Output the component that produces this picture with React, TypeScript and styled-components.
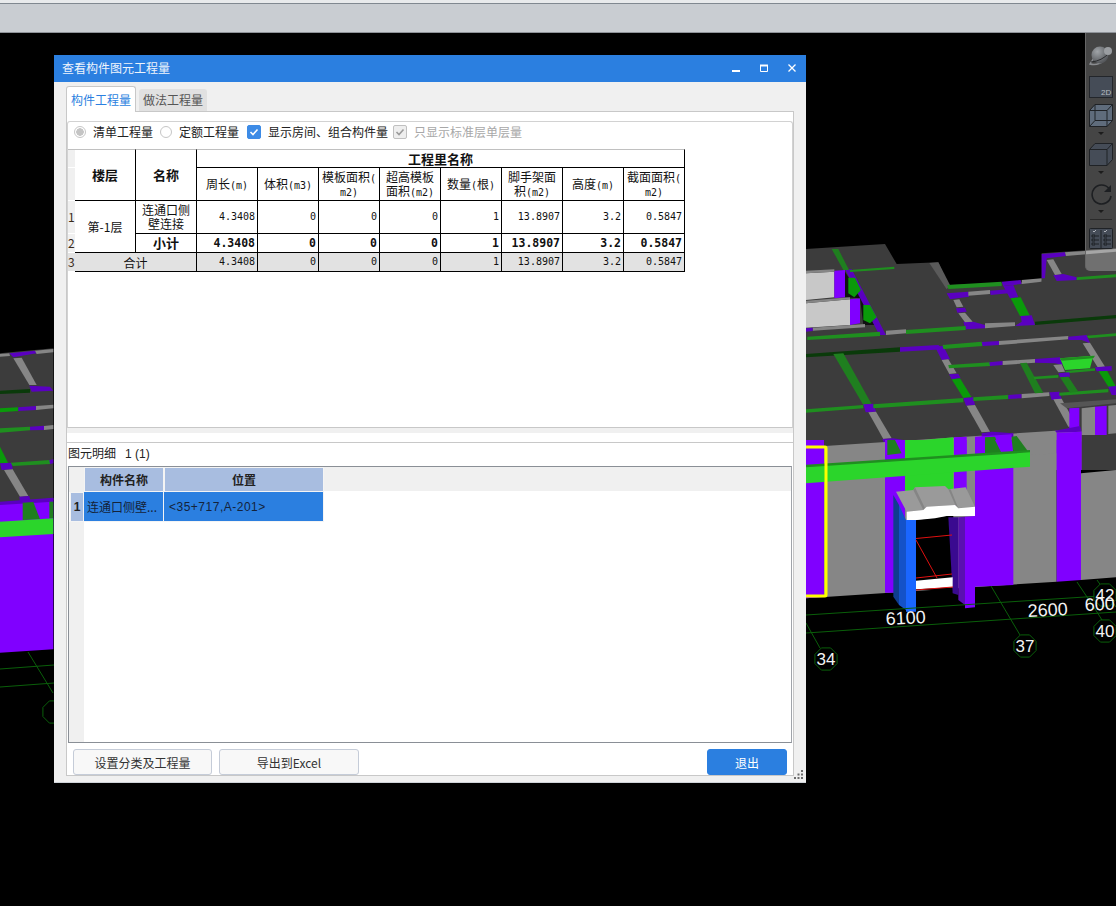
import React from 'react'
import styled, { createGlobalStyle } from 'styled-components'

const BLUE = '#2b7fe0'
const PURPLE = '#8000ff'
const DEEP = '#5a00c0'
const GRAY = '#868686'
const LIME = '#2bd52b'
const GREEN = '#1f8f1f'
const VIVID = '#0a9a0a'
const MOSS = '#1f7f1f'
const NIGHT = '#0a3a0a'
const SLAB = '#3c3c3c'
const GRID = '#0a5f0a'

const GlobalStyle = createGlobalStyle`
  html, body { margin: 0; padding: 0; background: #000; }
  body { font-family: "Noto Sans CJK SC", "Liberation Sans", sans-serif; font-size: 12px; color: #222; }
`

const Page = styled.div`
  width: 1116px;
  height: 906px;
  display: flex;
  flex-direction: column;
  overflow: hidden;
`

const TopBar = styled.div`
  height: 29px;
  flex: none;
  background: #c9cdd2;
  border-top: 3px solid #e8eaec;
  border-bottom: 1px solid #8f9399;
  box-shadow: inset 0 1px 0 #808890;
`

const Viewport = styled.div`
  position: relative;
  flex: 1;
  background: #000;
`

const SceneSvg = styled.svg`
  position: absolute;
  inset: 0;
  display: block;
`

/* scene */
type Shape = [string, number[]]

// coordinates were read from 3x crops, so they are mapped back here
const place = (ox: number, oy: number, a: number[]) =>
  a.map((v, i) => (i % 2 === 0 ? ox + v / 3 : oy + v / 3)).join(' ')

const upperRight: Shape[] = [
  [SLAB, [18, 27, 255, 12, 290, 72, 415, 67, 445, 135, 725, 125, 725, 40, 948, 25, 948, 600, 18, 640]],
  ['#c8c8c8', [18, 100, 103, 95, 103, 172, 18, 180]],
  ['#c8c8c8', [18, 190, 150, 178, 150, 255, 18, 263]],
  [PURPLE, [103, 92, 135, 90, 135, 172, 103, 175]],
  [PURPLE, [150, 178, 180, 175, 180, 250, 150, 255]],
  ['#111', [135, 95, 190, 180, 230, 255, 190, 255, 180, 175, 135, 172]],
  [GRAY, [18, 92, 103, 88, 103, 95, 18, 100]],
  [GRAY, [18, 182, 150, 172, 150, 178, 18, 190]],
  [DEEP, [135, 88, 155, 88, 258, 285, 238, 285]],
  [VIVID, [145, 113, 165, 113, 183, 150, 163, 172, 145, 160]],
  [VIVID, [190, 195, 210, 195, 230, 232, 210, 250, 190, 240]],
  [MOSS, [95, 27, 115, 27, 147, 90, 130, 90]],
  [GREEN, [150, 90, 283, 80, 283, 87, 150, 96]],
  ['#5a5a5a', [388, 69, 415, 67, 450, 135, 440, 148]],
  [DEEP, [440, 160, 505, 155, 507, 170, 450, 178]],
  [GRAY, [505, 155, 570, 150, 570, 162, 505, 167]],
  [DEEP, [570, 152, 625, 148, 625, 160, 572, 165]],
  [GREEN, [442, 135, 605, 125, 605, 138, 445, 147]],
  [DEEP, [605, 125, 662, 120, 665, 132, 610, 138]],
  [GRAY, [665, 120, 725, 115, 725, 125, 665, 132]],
  [DEEP, [610, 138, 640, 135, 655, 172, 630, 175]],
  [VIVID, [632, 175, 662, 172, 690, 228, 660, 228]],
  [DEEP, [662, 228, 695, 226, 705, 255, 645, 258, 665, 245]],
  [NIGHT, [705, 245, 948, 225, 948, 235, 705, 255]],
  [GRAY, [555, 250, 645, 247, 645, 258, 555, 265]],
  [DEEP, [490, 245, 520, 245, 555, 255, 555, 265, 497, 268]],
  [GREEN, [318, 270, 497, 258, 497, 270, 318, 282]],
  [GRAY, [258, 272, 318, 268, 318, 280, 258, 285]],
  [GRAY, [460, 180, 478, 178, 490, 200, 470, 202]],
  [DEEP, [468, 205, 495, 203, 500, 215, 472, 218]],
  [GRAY, [475, 220, 495, 218, 518, 245, 495, 247]],
  [GREEN, [22, 290, 240, 275, 240, 288, 22, 300]],
  [GRAY, [38, 263, 195, 252, 195, 262, 38, 272]],
  [DEEP, [18, 265, 38, 263, 38, 273, 18, 275]],
  [NIGHT, [18, 342, 300, 322, 300, 335, 18, 352]],
  [DEEP, [300, 322, 415, 315, 430, 328, 300, 335]],
  [DEEP, [405, 320, 430, 318, 450, 358, 425, 360]],
  [GRAY, [425, 360, 445, 358, 470, 400, 448, 402]],
  [DEEP, [447, 403, 475, 401, 482, 415, 455, 418]],
  [VIVID, [455, 418, 480, 415, 515, 472, 490, 474]],
  [DEEP, [490, 474, 520, 472, 525, 495, 498, 497]],
  [GRAY, [500, 497, 525, 495, 570, 575, 545, 577]],
  [GREEN, [428, 315, 545, 305, 548, 318, 430, 327]],
  [DEEP, [545, 306, 597, 303, 597, 315, 548, 318]],
  [GRAY, [597, 303, 805, 288, 805, 298, 597, 315]],
  [DEEP, [805, 290, 860, 285, 870, 310, 845, 300, 805, 300]],
  [GREEN, [860, 287, 948, 280, 948, 288, 865, 295]],
  [GRAY, [848, 310, 870, 308, 915, 380, 893, 382]],
  [VIVID, [895, 393, 920, 390, 948, 440, 925, 440]],
  [DEEP, [885, 382, 935, 378, 935, 392, 890, 394]],
  [DEEP, [925, 440, 948, 438, 948, 465, 935, 465]],
  [MOSS, [100, 342, 130, 340, 215, 493, 190, 495]],
  [GREEN, [18, 508, 190, 495, 190, 505, 18, 518]],
  [DEEP, [190, 493, 220, 491, 228, 515, 197, 517]],
  [GREEN, [220, 493, 490, 474, 490, 487, 220, 505]],
  [GRAY, [205, 517, 228, 515, 275, 595, 250, 597]],
  [DEEP, [247, 597, 280, 595, 310, 600, 310, 612, 255, 615]],
  [GREEN, [520, 472, 625, 465, 625, 477, 520, 483]],
  [DEEP, [625, 465, 665, 462, 665, 475, 625, 477]],
  [GRAY, [665, 462, 748, 457, 748, 468, 665, 475]],
  [DEEP, [748, 457, 778, 455, 785, 478, 755, 480]],
  [GREEN, [778, 458, 925, 447, 925, 457, 778, 467]],
  [GRAY, [760, 478, 785, 476, 830, 558, 805, 560]],
  [GREEN, [445, 375, 570, 367, 570, 378, 447, 385]],
  [DEEP, [568, 367, 608, 363, 608, 375, 570, 378]],
  [GRAY, [608, 363, 705, 357, 705, 368, 608, 375]],
  [DEEP, [705, 357, 780, 352, 788, 375, 765, 370, 705, 368]],
  [GRAY, [760, 375, 785, 373, 795, 395, 775, 397]],
  [LIME, [780, 355, 880, 347, 870, 385, 795, 390]],
  [GREEN, [780, 355, 885, 347, 880, 355, 785, 362]],
  [GREEN, [795, 393, 885, 385, 885, 392, 800, 400]],
  [DEEP, [775, 400, 808, 397, 810, 410, 780, 412]],
  [MOSS, [660, 370, 680, 368, 730, 458, 705, 460]],
  [GREEN, [700, 410, 775, 405, 775, 413, 703, 418]],
  [MOSS, [780, 412, 805, 410, 835, 455, 810, 458]],
  ['#555', [780, 490, 948, 478, 948, 490, 800, 505]],
  [DEEP, [725, 42, 795, 37, 798, 48, 740, 55, 735, 115, 725, 115]],
  [GRAY, [795, 37, 948, 27, 948, 35, 798, 48]],
  [DEEP, [760, 105, 790, 102, 830, 112, 830, 120, 770, 123]],
  [GREEN, [830, 112, 948, 103, 948, 112, 830, 120]],
  [GRAY, [740, 60, 760, 58, 785, 102, 765, 105]],
  [GRAY, [18, 622, 765, 572, 845, 572, 845, 690, 18, 690]],
  [SLAB, [845, 585, 948, 575, 948, 690, 845, 690]],
  [PURPLE, [808, 505, 838, 503, 838, 572, 808, 572]],
  [GRAY, [845, 505, 885, 500, 885, 585, 845, 585]],
  [PURPLE, [885, 500, 920, 497, 920, 585, 885, 585]],
  [GRAY, [925, 497, 948, 495, 948, 580, 925, 582]],
  [DEEP, [545, 580, 575, 575, 640, 580, 640, 592, 545, 590]],
  [DEEP, [765, 572, 840, 558, 845, 575, 770, 578]],
  [PURPLE, [770, 578, 845, 575, 845, 690, 770, 690]],
  [PURPLE, [255, 615, 315, 612, 315, 690, 255, 690]],
  [MOSS, [262, 615, 285, 612, 305, 660, 262, 662]],
  [LIME, [315, 605, 460, 592, 460, 650, 315, 660]],
  [PURPLE, [462, 592, 500, 590, 500, 650, 462, 650]],
  [PURPLE, [525, 590, 635, 583, 635, 690, 525, 690]],
  [MOSS, [555, 592, 585, 590, 605, 640, 555, 642]],
  [MOSS, [635, 590, 650, 588, 685, 635, 635, 640]],
]

const lowerRight: Shape[] = [
  [GRAY, [18, 90, 770, 40, 770, 425, 18, 475]],
  [GRAY, [843, 100, 948, 90, 948, 412, 843, 420]],
  [PURPLE, [770, 0, 843, 0, 843, 420, 770, 425]],
  [PURPLE, [18, 0, 72, 0, 72, 470, 18, 475]],
  [PURPLE, [255, 0, 315, 0, 315, 458, 255, 458]],
  [PURPLE, [462, 0, 500, 0, 500, 200, 462, 200]],
  [PURPLE, [525, 0, 640, 0, 640, 435, 525, 440]],
  [LIME, [315, 0, 460, 0, 460, 150, 315, 155]],
  [MOSS, [262, 0, 285, 0, 305, 40, 262, 45]],
  [MOSS, [555, 0, 585, 0, 605, 40, 555, 42]],
  [MOSS, [635, 0, 650, 0, 680, 35, 640, 38]],
  [LIME, [18, 80, 690, 35, 690, 80, 18, 130]],
  [GREEN, [18, 74, 690, 30, 690, 37, 18, 82]],
  ['#9a9a9a', [288, 155, 340, 150, 345, 142, 435, 138, 445, 148, 497, 142, 525, 200, 470, 205, 465, 195, 380, 200, 370, 210, 320, 215]],
  ['#858585', [340, 150, 345, 142, 375, 205, 370, 210]],
  ['#858585', [445, 148, 452, 148, 475, 205, 470, 205]],
  ['#000', [348, 240, 460, 225, 460, 450, 348, 450]],
  ['#fff', [320, 215, 370, 210, 380, 200, 465, 195, 475, 205, 525, 200, 525, 228, 440, 228, 405, 235, 320, 243]],
  ['#0f3d8f', [280, 165, 297, 195, 297, 495, 280, 470]],
  ['#1452c8', [297, 195, 318, 240, 318, 510, 297, 495]],
  ['#1a66ff', [318, 240, 348, 240, 348, 515, 318, 515]],
  ['#3a0a90', [445, 232, 475, 232, 475, 465, 458, 460]],
  ['#5a10b0', [475, 232, 495, 230, 495, 495, 475, 480]],
  [PURPLE, [495, 230, 525, 228, 525, 502, 495, 505]],
  ['#fff', [348, 422, 458, 412, 458, 442, 348, 448]],
]

const leftSide: Shape[] = [
  [SLAB, [0, 70, 160, 55, 160, 510, 0, 525]],
  [DEEP, [28, 70, 105, 62, 110, 70, 40, 82]],
  [GRAY, [105, 62, 160, 57, 160, 67, 110, 72]],
  [GRAY, [0, 72, 28, 70, 30, 78, 0, 80]],
  [GRAY, [40, 85, 65, 83, 110, 165, 88, 165]],
  [DEEP, [88, 167, 150, 170, 160, 182, 95, 185]],
  [NIGHT, [0, 182, 90, 177, 90, 188, 0, 192]],
  [VIVID, [0, 235, 55, 232, 55, 243, 0, 247]],
  [DEEP, [55, 232, 108, 228, 108, 240, 55, 243]],
  [GRAY, [108, 228, 160, 224, 160, 235, 108, 240]],
  [GREEN, [0, 295, 90, 290, 90, 301, 0, 308]],
  [DEEP, [90, 290, 132, 287, 132, 300, 90, 301]],
  [GRAY, [132, 288, 160, 285, 160, 297, 132, 300]],
  [VIVID, [0, 350, 25, 400, 0, 400]],
  [DEEP, [0, 400, 35, 398, 38, 418, 5, 420]],
  [GREEN, [32, 398, 150, 390, 150, 402, 38, 408]],
  [DEEP, [148, 390, 160, 388, 160, 400, 150, 402]],
  [GRAY, [12, 420, 38, 418, 85, 498, 60, 500]],
  [DEEP, [58, 500, 88, 498, 92, 515, 60, 517]],
  [PURPLE, [0, 520, 160, 505, 160, 958, 0, 968]],
  [DEEP, [0, 515, 160, 503, 160, 515, 0, 525]],
  [MOSS, [68, 518, 100, 516, 120, 568, 68, 570]],
  [MOSS, [148, 515, 160, 515, 160, 565, 148, 565]],
  [LIME, [0, 575, 160, 565, 160, 612, 0, 622]],
]

const gridLines = [
  [806, 615, 1116, 595],
  [806, 633, 1013, 619, 1116, 612],
  [806, 623, 820, 648],
  [991, 586, 1020, 635],
  [1077, 582, 1097, 612, 1102, 620],
  [1097, 580, 1116, 607],
  [28, 652, 53, 693],
  [0, 669, 54, 665],
  [0, 687, 54, 683],
]

const badges = [
  { x: 826, y: 659, label: '34' },
  { x: 1025, y: 646, label: '37' },
  { x: 1105, y: 631, label: '40' },
  { x: 1105, y: 595, label: '42' },
  { x: 54, y: 712, label: '' },
]

const octagon = (cx: number, cy: number, r: number) =>
  Array.from({ length: 8 }, (_, i) => {
    const a = Math.PI / 8 + (i * Math.PI) / 4
    return `${cx + r * Math.cos(a)},${cy + r * Math.sin(a)}`
  }).join(' ')

const SceneText = styled.text`
  font-family: "Liberation Sans", sans-serif;
  fill: #f4f4f4;
`

const Scene = () => (
  <SceneSvg width="1116" height="873" viewBox="0 33 1116 873">
    {upperRight.map(([fill, a], i) => (
      <polygon key={`u${i}`} fill={fill} points={place(800, 240, a)} />
    ))}
    {lowerRight.map(([fill, a], i) => (
      <polygon key={`l${i}`} fill={fill} points={place(800, 440, a)} />
    ))}
    {leftSide.map(([fill, a], i) => (
      <polygon key={`s${i}`} fill={fill} points={place(0, 330, a)} />
    ))}
    <path d="M806 447h19q1 0 1 1v147q0 1-1 1h-19" fill="none" stroke="#ffff00" strokeWidth="3" />
    <g stroke="#e01010" strokeWidth="1" fill="none">
      <path d="M916 538.5 952 535M916 540 937 578M916 578 952 574M916 590 953 587" />
    </g>
    {gridLines.map((l, i) => (
      <polyline key={i} points={l.join(' ')} fill="none" stroke={GRID} strokeWidth="1" />
    ))}
    {badges.map(b => (
      <g key={b.x}>
        <polygon points={octagon(b.x, b.y, 12)} fill="#000" stroke={GRID} strokeWidth="1" />
        <SceneText x={b.x} y={b.y + 6} textAnchor="middle" fontSize="17">{b.label}</SceneText>
      </g>
    ))}
    <SceneText x="886" y="625" fontSize="18" transform="rotate(-3 886 625)">6100</SceneText>
    <SceneText x="1028" y="617" fontSize="18" transform="rotate(-3 1028 617)">2600</SceneText>
    <SceneText x="1085" y="611" fontSize="18" transform="rotate(-3 1085 611)">600</SceneText>
  </SceneSvg>
)

/* right toolbar in the viewport */
const ViewTools = styled.div`
  position: absolute;
  top: 0;
  right: 0;
  width: 31px;
  height: 238px;
  padding-top: 12px;
  box-sizing: border-box;
  display: flex;
  flex-direction: column;
  align-items: center;
  background: rgba(255, 255, 255, 0.27);
  border-left: 1px solid #666;
  border-bottom-left-radius: 5px;
`

const ToolIcon = styled.svg<{ $before?: number; $after?: number }>`
  display: block;
  flex: none;
  margin-top: ${({ $before }) => $before ?? 0}px;
  margin-bottom: ${({ $after }) => $after ?? 0}px;
`

const Drop = styled.div`
  flex: none;
  width: 0;
  height: 0;
  border-left: 3px solid transparent;
  border-right: 3px solid transparent;
  border-top: 3px solid #1c1c1c;
`

const ToolRule = styled.div`
  flex: none;
  width: 22px;
  height: 1px;
  margin: 6px 0 7px;
  background: #2a2a2a;
`

const Tools = () => (
  <ViewTools>
    <ToolIcon width="24" height="21" viewBox="0 0 24 21" $after={10}>
      <defs>
        <radialGradient id="ball" cx="0.35" cy="0.3" r="0.8">
          <stop offset="0" stopColor="#a0a4a8" />
          <stop offset="1" stopColor="#4a4c50" />
        </radialGradient>
      </defs>
      <path d="M5 13 1 19Q9 21 16 15" fill="none" stroke="#8a8c90" strokeWidth="1.500" />
      <circle cx="11" cy="10" r="8.500" fill="url(#ball)" />
      <path d="M2 17Q13 16 20 8" stroke="#2a2b2e" strokeWidth="1" fill="none" />
      <circle cx="19" cy="6" r="4" fill="#9a9da1" />
    </ToolIcon>
    <ToolIcon width="24" height="22" viewBox="0 0 24 22" $after={6}>
      <rect x="0.5" y="0.5" width="23" height="21" fill="#454c57" stroke="#23262b" />
      <text x="12" y="19" fontSize="8" fill="#b8bcc2" fontFamily="Liberation Sans">2D</text>
    </ToolIcon>
    <ToolIcon width="24" height="23" viewBox="0 0 24 23" $after={5}>
      <path d="M.5 6.500 6 .5h17.500v16L18 22.500H.5z" fill="#5f6c7c" stroke="#1f2226" />
      <path d="M.5 6.500H18V22.500M18 6.500 23.500.5M6 .5V16.500H23.500M6 16.500.5 22.500" fill="none" stroke="#1f2226" />
    </ToolIcon>
    <Drop />
    <ToolIcon width="24" height="23" viewBox="0 0 24 23" $before={8} $after={5}>
      <path d="M.5 6.500 6 .5h17.500v16L18 22.500H.5z" fill="#454c57" stroke="#1f2226" />
      <path d="M.5 6.500H18V22.500M18 6.500 23.500.5" fill="none" stroke="#1f2226" />
    </ToolIcon>
    <Drop />
    <ToolIcon width="24" height="21" viewBox="0 0 24 21" $before={10} $after={5}>
      <path d="M20 4.500A9.500 9.500 0 1 0 22 12" fill="none" stroke="#1d1f22" strokeWidth="1.600" />
      <path d="M22 1v7h-7z" fill="#1d1f22" />
    </ToolIcon>
    <Drop />
    <ToolRule />
    <ToolIcon width="24" height="22" viewBox="0 0 24 22">
      <rect x="0.5" y="1.500" width="23" height="20" rx="1" fill="#454c57" stroke="#1f2226" />
      <path d="M12 3v18M3 8h3v2H3zM3 12h3v2H3zM3 16h3v2H3zM15 8h3v2h-3zM15 12h3v2h-3zM15 16h3v2h-3zM7 9h3M7 13h3M7 17h3M19 9h3M19 13h3M19 17h3" fill="none" stroke="#15171a" strokeWidth="0.800" />
      <path d="M4 4l1 1 2-2M15 4l1 1 2-2" fill="none" stroke="#c8ccd0" strokeWidth="0.800" />
    </ToolIcon>
  </ViewTools>
)

/* dialog */
const Dialog = styled.div`
  position: absolute;
  left: 54px;
  top: 22px;
  width: 752px;
  height: 728px;
  display: flex;
  flex-direction: column;
  box-sizing: border-box;
  background: #f0f0f0;
  border-bottom: 1px solid #cfd3d8;
`

const TitleBar = styled.div`
  height: 27px;
  flex: none;
  box-sizing: border-box;
  display: flex;
  align-items: center;
  justify-content: space-between;
  padding: 0 8px 2px;
  background: ${BLUE};
  color: #eef4fc;
`

const WindowButtons = styled.div`
  display: flex;
  align-items: center;
  gap: 20px;
  margin-right: 2px;
`

const DialogBody = styled.div`
  flex: 1;
  min-height: 0;
  display: flex;
  flex-direction: column;
  padding: 4px 12px 6px;
  position: relative;
`

const TabStrip = styled.div`
  height: 25px;
  flex: none;
  display: flex;
  align-items: flex-end;
  gap: 3px;
`

const Tab = styled.div<{ $active?: boolean }>`
  box-sizing: border-box;
  text-align: center;
  ${({ $active }) =>
    $active
      ? `
    width: 70px;
    height: 26px;
    margin-bottom: -1px;
    line-height: 26px;
    color: ${BLUE};
    background: #fff;
    border: 1px solid #c8c8c8;
    border-bottom: none;
    border-radius: 3px 3px 0 0;
    position: relative;
    z-index: 1;
  `
      : `
    width: 68px;
    height: 22px;
    line-height: 22px;
    color: #555;
    background: #e1e1e1;
    border-radius: 3px 3px 0 0;
  `}
`

const TabPane = styled.div`
  flex: 1;
  min-height: 0;
  display: flex;
  flex-direction: column;
  background: #fff;
  border: 1px solid #c8c8c8;
  padding-top: 9px;
`

const GroupBox = styled.div`
  height: 307px;
  flex: none;
  box-sizing: border-box;
  border: 1px solid #d2d2d2;
  border-bottom: 1px solid #c8c8c8;
  border-radius: 3px 3px 0 0;
`

const OptionRow = styled.div`
  height: 27px;
  display: flex;
  align-items: center;
  padding-left: 6px;
  padding-bottom: 7px;
  box-sizing: border-box;
`

const Radio = styled.span<{ $on?: boolean }>`
  flex: none;
  width: 12px;
  height: 12px;
  box-sizing: border-box;
  border: 1px solid #c6c6c6;
  border-radius: 50%;
  background: ${({ $on }) => ($on ? 'radial-gradient(circle, #c4c4c4 0 3.5px, #fff 4px)' : '#fff')};
`

const Box = styled.span<{ $off?: boolean }>`
  flex: none;
  width: 14px;
  height: 14px;
  box-sizing: border-box;
  display: flex;
  align-items: center;
  justify-content: center;
  border-radius: 2px;
  background: ${({ $off }) => ($off ? '#eee' : '#3d8be6')};
  border: 1px solid ${({ $off }) => ($off ? '#c0c0c0' : '#3d8be6')};
`

const Option = styled.span<{ $dim?: boolean; $gap: number }>`
  margin-left: 7px;
  margin-right: ${({ $gap }) => $gap}px;
  color: ${({ $dim }) => ($dim ? '#a8a8a8' : '#222')};
  line-height: 14px;
`

const QuantityTable = styled.table`
  table-layout: fixed;
  width: 617px;
  border-collapse: separate;
  border-spacing: 0;
  color: #111;

  td, th {
    padding: 0;
    border-right: 1px solid #000;
    border-bottom: 1px solid #000;
    box-sizing: border-box;
    text-align: center;
    line-height: 14px;
    font-size: 12px;
    font-weight: 400;
  }
  thead tr:first-child td, thead tr:first-child th {
    border-top: 1px solid #c0c0c0;
  }
  tr.head-top { height: 19px; }
  tr.head-sub { height: 33px; }
  tr.line { height: 33px; }
  tr.sum { height: 19px; }
  tr.total { height: 19px; }
  tr.total td { background: #e2e2e2; }
  .strong { font-weight: 700; font-size: 13px; }
  td.merged { padding-top: 1px; }
`

const Gutter = styled.td`
  && {
    width: 7px;
    background: #f0f0f0;
    border-right: none;
    border-bottom: 1px solid #fff;
    text-align: left;
    color: #3a2a18;
    overflow: hidden;
  }
`

const Num = styled.td<{ $bold?: boolean }>`
  && {
    text-align: right;
    padding-right: 2px;
    font-family: "DejaVu Sans Mono", "Liberation Mono", monospace;
    font-size: ${({ $bold }) => ($bold ? 11.5 : 10)}px;
    font-weight: ${({ $bold }) => ($bold ? 700 : 400)};
  }
`

const Unit = styled.span`
  font-family: "DejaVu Sans Mono", "Liberation Mono", monospace;
  font-size: 10px;
  line-height: 1;
`

const Splitter = styled.div`
  flex: none;
  height: 5px;
  background: #f0f0f0;
  margin-bottom: 9px;
`

const DetailLabel = styled.div`
  flex: none;
  height: 24px;
  box-sizing: border-box;
  border-top: 1px solid #c8c8c8;
  padding-left: 1px;
  line-height: 19px;
  color: #222;
`

const DetailCount = styled.span`
  margin-left: 9px;
  font-family: "Liberation Sans", sans-serif;
`

const DetailGrid = styled.div`
  flex: 1;
  min-height: 0;
  margin: 0 1px;
  box-sizing: border-box;
  display: grid;
  grid-template-columns: 15px 80px 160px 1fr;
  grid-template-rows: 25px 30px 1fr;
  border: 1px solid #8a8f96;
  border-right-color: #a0a4aa;
  background: #fff;
`

const Corner = styled.div`
  background: #f0f0f0;
`

const HeadCell = styled.div`
  background: #a8bde0;
  border: 1px solid #f4f4f4;
  display: flex;
  align-items: center;
  justify-content: center;
  font-weight: 700;
  color: #222;
`

const HeadRest = styled.div`
  background: #f0f0f0;
  border-bottom: 1px solid #fff;
`

const RowMark = styled.div`
  background: #a8bde0;
  border: 1px solid #f4f4f4;
  margin-left: 1px;
  display: flex;
  align-items: center;
  justify-content: center;
  font-family: "Liberation Sans", sans-serif;
  font-weight: 700;
  font-size: 12px;
`

const RowCell = styled.div<{ $latin?: boolean }>`
  background: ${BLUE};
  border-right: 1px solid #f4f4f4;
  border-bottom: 1px solid #f4f4f4;
  padding-left: ${({ $latin }) => ($latin ? 5 : 3)}px;
  display: flex;
  align-items: center;
  white-space: nowrap;
  overflow: hidden;
  color: #14233a;
  font-family: ${({ $latin }) => ($latin ? '"Liberation Sans", sans-serif' : 'inherit')};
  letter-spacing: ${({ $latin }) => ($latin ? 0.5 : 0)}px;
`

const GutterFill = styled.div`
  background: #f0f0f0;
`

const Footer = styled.div`
  flex: none;
  height: 32px;
  box-sizing: border-box;
  display: flex;
  align-items: flex-start;
  gap: 7px;
  padding: 6px 6px 0;
`

const Button = styled.div<{ $primary?: boolean; $width: number }>`
  box-sizing: border-box;
  width: ${({ $width }) => $width}px;
  height: 26px;
  display: flex;
  align-items: center;
  justify-content: center;
  border-radius: 3px;
  color: ${({ $primary }) => ($primary ? '#fff' : '#333')};
  background: ${({ $primary }) => ($primary ? BLUE : '#f8f8f8')};
  border: 1px solid ${({ $primary }) => ($primary ? BLUE : '#c5ccd8')};
  margin-left: ${({ $primary }) => ($primary ? 'auto' : '0')};
`

const Grip = styled.svg`
  position: absolute;
  right: 2px;
  bottom: 2px;
  display: block;
`

const columns: React.ReactNode[] = [
  <>周长<Unit>(m)</Unit></>,
  <>体积<Unit>(m3)</Unit></>,
  <>模板面积<Unit>(</Unit><br /><Unit>m2)</Unit></>,
  <>超高模板<br />面积<Unit>(m2)</Unit></>,
  <>数量<Unit>(</Unit>根<Unit>)</Unit></>,
  <>脚手架面<br />积<Unit>(m2)</Unit></>,
  <>高度<Unit>(m)</Unit></>,
  <>截面面积<Unit>(</Unit><br /><Unit>m2)</Unit></>,
]

const values = ['4.3408', '0', '0', '0', '1', '13.8907', '3.2', '0.5847']

const App = () => (
  <Page>
    <GlobalStyle />
    <TopBar />
    <Viewport>
      <Scene />
      <Tools />
      <Dialog>
        <TitleBar>
          <span>查看构件图元工程量</span>
          <WindowButtons>
            <svg width="8" height="8" viewBox="0 0 8 8"><path d="M0 7h8" stroke="#fff" strokeWidth="2" /></svg>
            <svg width="8" height="8" viewBox="0 0 8 8"><path d="M.5 1.500h7v6h-7z" fill="none" stroke="#fff" /><path d="M0 1.500h8" stroke="#fff" strokeWidth="2" /></svg>
            <svg width="8" height="8" viewBox="0 0 8 8"><path d="M.5.5l7 7M7.500.5l-7 7" stroke="#fff" strokeWidth="1.300" /></svg>
          </WindowButtons>
        </TitleBar>
        <DialogBody>
          <TabStrip>
            <Tab $active>构件工程量</Tab>
            <Tab>做法工程量</Tab>
          </TabStrip>
          <TabPane>
            <GroupBox>
              <OptionRow>
                <Radio $on />
                <Option $gap={7}>清单工程量</Option>
                <Radio />
                <Option $gap={8}>定额工程量</Option>
                <Box>
                  <svg width="10" height="10" viewBox="0 0 10 10"><path d="M1.500 5 4 7.500 8.500 2.500" fill="none" stroke="#fff" strokeWidth="1.600" /></svg>
                </Box>
                <Option $gap={5}>显示房间、组合构件量</Option>
                <Box $off>
                  <svg width="10" height="10" viewBox="0 0 10 10"><path d="M1.500 5 4 7.500 8.500 2.500" fill="none" stroke="#9a9a9a" strokeWidth="1.600" /></svg>
                </Box>
                <Option $gap={0} $dim>只显示标准层单层量</Option>
              </OptionRow>
              <QuantityTable>
                <colgroup>
                  <col style={{ width: 7 }} />
                  {Array.from({ length: 10 }, (_, i) => <col key={i} style={{ width: 61 }} />)}
                </colgroup>
                <thead>
                  <tr className="head-top">
                    <Gutter as="th" />
                    <th className="strong" rowSpan={2}>楼层</th>
                    <th className="strong" rowSpan={2}>名称</th>
                    <th className="strong" colSpan={8}>工程里名称</th>
                  </tr>
                  <tr className="head-sub">
                    <Gutter as="th" />
                    {columns.map((c, i) => <th key={i}>{c}</th>)}
                  </tr>
                </thead>
                <tbody>
                  <tr className="line">
                    <Gutter>1</Gutter>
                    <td rowSpan={2}>第-1层</td>
                    <td>连通口侧<br />壁连接</td>
                    {values.map((v, i) => <Num key={i}>{v}</Num>)}
                  </tr>
                  <tr className="sum">
                    <Gutter>2</Gutter>
                    <td className="strong">小计</td>
                    {values.map((v, i) => <Num key={i} $bold>{v}</Num>)}
                  </tr>
                  <tr className="total">
                    <Gutter>3</Gutter>
                    <td className="merged" colSpan={2}>合计</td>
                    {values.map((v, i) => <Num key={i}>{v}</Num>)}
                  </tr>
                </tbody>
              </QuantityTable>
            </GroupBox>
            <Splitter />
            <DetailLabel>图元明细<DetailCount>1 (1)</DetailCount></DetailLabel>
            <DetailGrid>
              <Corner />
              <HeadCell>构件名称</HeadCell>
              <HeadCell>位置</HeadCell>
              <HeadRest />
              <RowMark>1</RowMark>
              <RowCell>连通口侧壁...</RowCell>
              <RowCell $latin>&lt;35+717,A-201&gt;</RowCell>
              <div />
              <GutterFill />
            </DetailGrid>
            <Footer>
              <Button $width={139}>设置分类及工程量</Button>
              <Button $width={140}>导出到Excel</Button>
              <Button $primary $width={80}>退出</Button>
            </Footer>
          </TabPane>
          <Grip width="10" height="10" viewBox="0 0 10 10" fill="#6c6c6c">
            <rect x="7" y="0" width="2" height="2" />
            <rect x="3.500" y="3.500" width="2" height="2" />
            <rect x="7" y="3.500" width="2" height="2" />
            <rect x="0" y="7" width="2" height="2" />
            <rect x="3.500" y="7" width="2" height="2" />
            <rect x="7" y="7" width="2" height="2" />
          </Grip>
        </DialogBody>
      </Dialog>
    </Viewport>
  </Page>
)

export default App
